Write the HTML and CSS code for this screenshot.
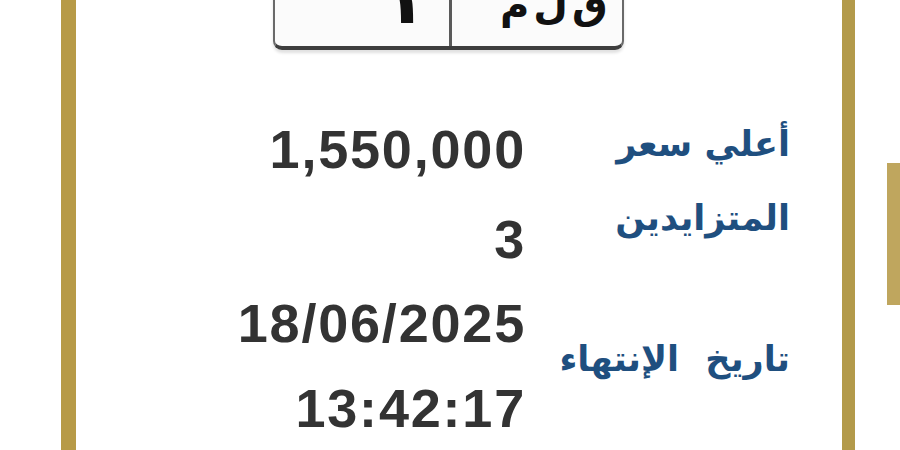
FILE: index.html
```html
<!DOCTYPE html>
<html lang="ar">
<head>
<meta charset="utf-8">
<link rel="stylesheet" href="styles.css">
</head>
<body>
<div class="card">
  <div class="plate">
    <div class="plate-cell plate-num">١</div>
    <div class="plate-cell plate-letters">ق ل م</div>
  </div>
  <div class="info" dir="rtl">
    <div class="label l1">أعلي سعر</div>
    <div class="value">1,550,000</div>
    <div class="label l2">المتزايدين</div>
    <div class="value">3</div>
    <div class="label l3">تاريخ الإنتهاء</div>
    <div class="value">18/06/2025</div>
    <div class="value">13:42:17</div>
  </div>
</div>
<div class="stub"></div>
</body>
</html>
```

FILE: styles.css
```css
html, body {
  margin: 0;
  padding: 0;
}
body {
  width: 900px;
  height: 450px;
  overflow: hidden;
  background: #ffffff;
  display: flex;
  align-items: flex-start;
}
.card {
  flex: none;
  margin-left: 61px;
  width: 794px;
  height: 450px;
  box-sizing: border-box;
  border-left: 15px solid #b79a47;
  border-right: 13px solid #b39a4a;
  background: #ffffff;
  overflow: hidden;
}
.plate {
  margin-top: -12px;
  margin-left: 197px;
  width: 351px;
  height: 62px;
  box-sizing: border-box;
  display: flex;
  border: 2px solid #6a6a6a;
  border-bottom: 4px solid #3e3e3e;
  border-radius: 0 0 9px 9px;
  box-shadow: 0 3px 3px rgba(0,0,0,0.12);
  background: #fbfbfb;
  overflow: hidden;
}
.plate-cell {
  box-sizing: border-box;
  display: flex;
  align-items: flex-end;
  font-family: "DejaVu Sans", sans-serif;
  font-weight: bold;
  color: #111;
  line-height: 1;
  white-space: nowrap;
  overflow: hidden;
}
.plate-num {
  flex: none;
  width: 177px;
  border-right: 3px solid #5a5a5a;
  font-size: 70px;
  padding-bottom: 12px;
  padding-left: 108px;
}
.plate-letters {
  flex: 1;
  min-width: 0;
  font-size: 40px;
  word-spacing: -10px;
  padding-bottom: 22px;
  padding-left: 48px;
}
.info {
  margin-top: 56px;
  margin-right: 52px;
  display: grid;
  grid-template-columns: 265px auto;
  grid-template-rows: 90px 84px 85px 85px;
  justify-content: start;
}
.label {
  font-family: "DejaVu Sans", sans-serif;
  font-weight: bold;
  font-size: 35px;
  color: #1f4f7f;
  align-self: center;
  text-align: right;
  white-space: nowrap;
}
.l1 { margin-bottom: 14px; }
.l2 { margin-bottom: 40px; }
.l3 {
  grid-row: span 2;
  margin-bottom: 12px;
  word-spacing: 14px;
}
.value {
  direction: ltr;
  text-align: right;
  font-family: "Liberation Sans", Arial, sans-serif;
  font-weight: bold;
  font-size: 54px;
  line-height: 86px;
  color: #333333;
  letter-spacing: 1.8px;
  margin-right: -1px;
}
.stub {
  flex: none;
  margin-left: 32px;
  margin-top: 163px;
  width: 13px;
  height: 142px;
  background: #bfa65e;
}
```
